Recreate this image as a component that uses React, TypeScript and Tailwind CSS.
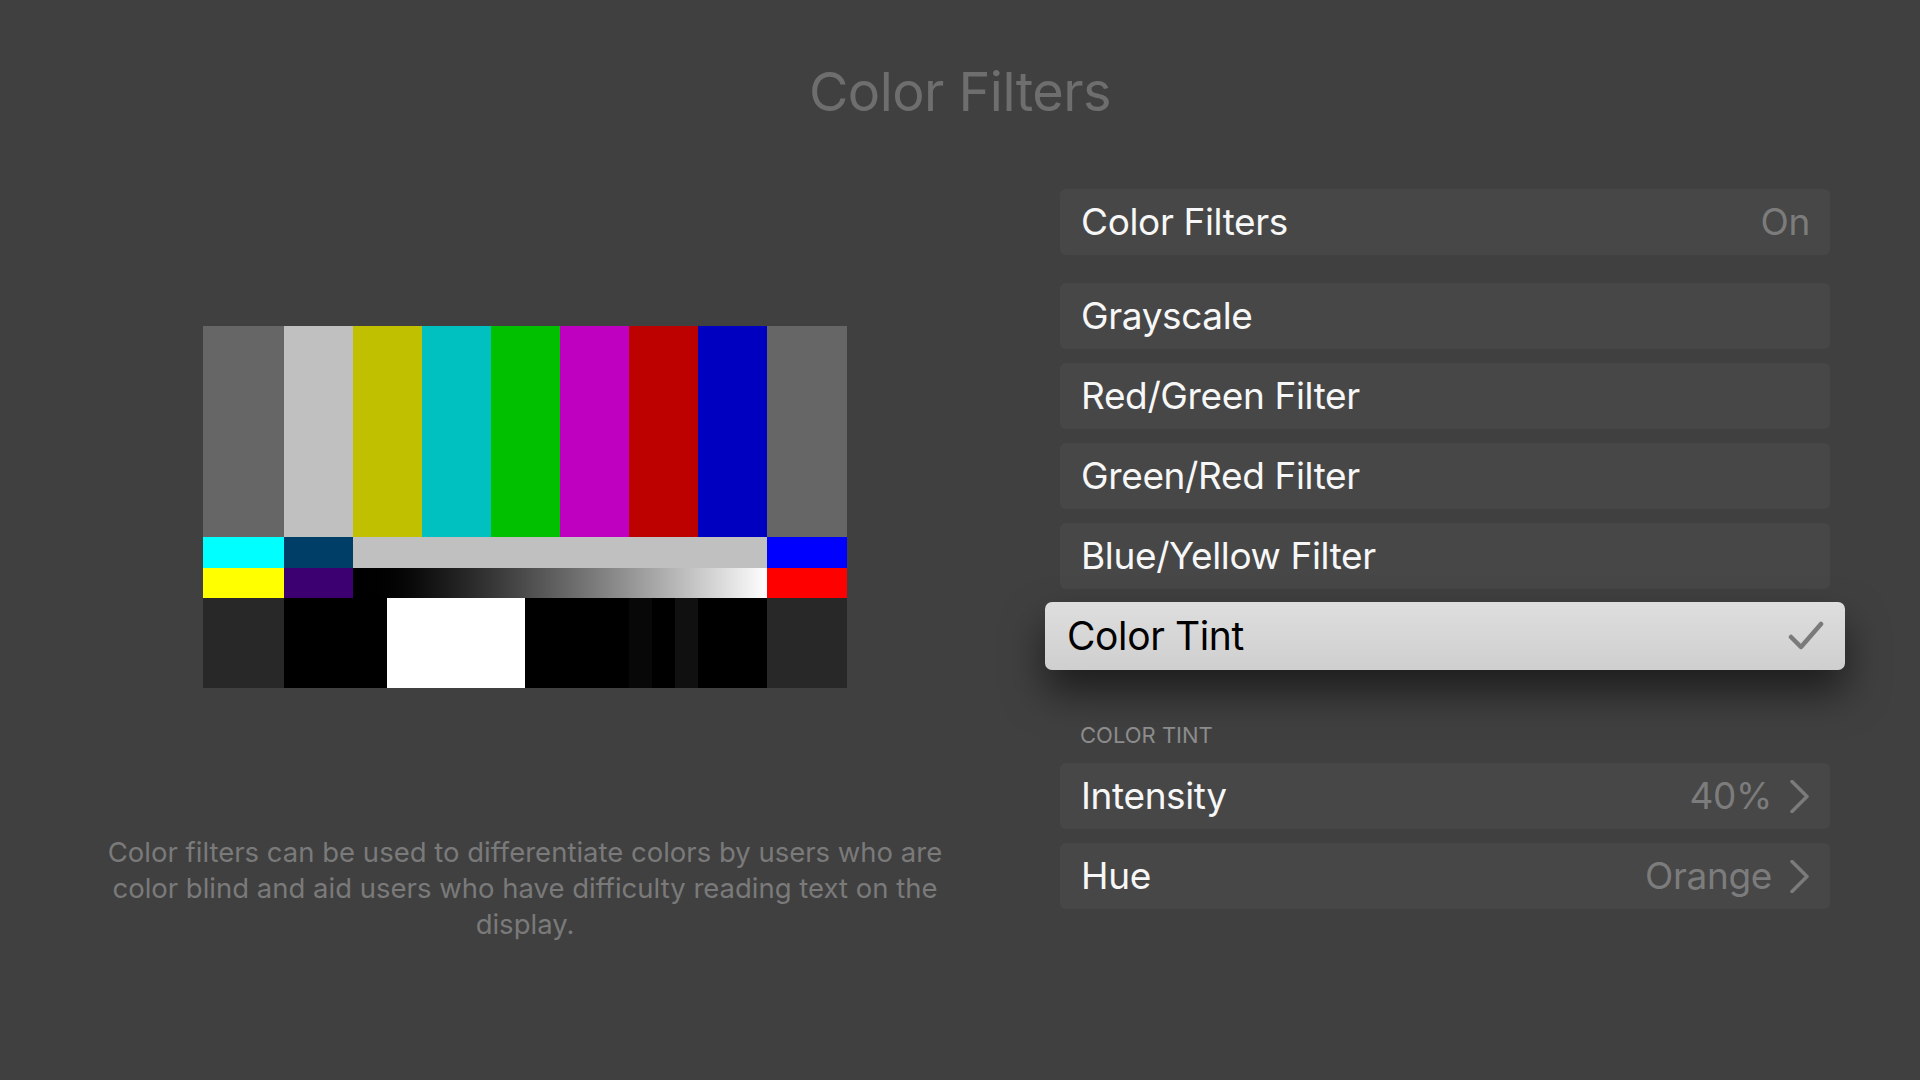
import React from "react"

const topBars = ["#c0c0c0", "#c0c000", "#00c0c0", "#00c000", "#c000c0", "#bd0000", "#0000c0"]

function TestPattern() {
  return (
    <div className="flex flex-col w-[644px] h-[362px]">
      {/* 75% bars */}
      <div className="flex h-[211px]">
        <div className="w-[80.5px] bg-[#666666]" />
        {topBars.map((c) => (
          <div key={c} className="w-[69px]" style={{ backgroundColor: c }} />
        ))}
        <div className="w-[80.5px] bg-[#666666]" />
      </div>
      <div className="flex h-[31px]">
        <div className="w-[80.5px] bg-[#00ffff]" />
        <div className="w-[69px] bg-[#003e68]" />
        <div className="w-[414px] bg-[#c0c0c0]" />
        <div className="w-[80.5px] bg-[#0000ff]" />
      </div>
      <div className="flex h-[30px]">
        <div className="w-[80.5px] bg-[#ffff00]" />
        <div className="w-[69px] bg-[#3c0070]" />
        <div className="w-[414px] bg-gradient-to-r from-black to-white" />
        <div className="w-[80.5px] bg-[#ff0000]" />
      </div>
      {/* pluge row */}
      <div className="flex h-[90px]">
        <div className="w-[80.5px] bg-[#282828]" />
        <div className="w-[103.5px] bg-black" />
        <div className="w-[138px] bg-white" />
        <div className="w-[103.5px] bg-black" />
        <div className="w-[23px] bg-[#080808]" />
        <div className="w-[23px] bg-black" />
        <div className="w-[23px] bg-[#101010]" />
        <div className="w-[69px] bg-black" />
        <div className="w-[80.5px] bg-[#282828]" />
      </div>
    </div>
  )
}

function Chevron() {
  return (
    <svg width="20" height="33" viewBox="0 0 20 33" fill="none" className="ml-[18px]">
      <path d="M2 1.5 L17 16.5 L2 31.5" stroke="#7b7b7b" strokeWidth="3.5" strokeLinecap="round" strokeLinejoin="round" />
    </svg>
  )
}

function Row({ label, value, chevron }: { label: string; value?: string; chevron?: boolean }) {
  return (
    <div className="flex items-center h-[66px] rounded-[6px] bg-[#474747] pl-[21px] pr-[20px]">
      <span className="text-[37px] text-[#f7f7f7] tracking-[-0.01em]">{label}</span>
      <span className="ml-auto text-[37px] text-[#7c7c7c] tracking-[-0.01em]">{value}</span>
      {chevron && <Chevron />}
    </div>
  )
}

export default function App() {
  return (
    <div className="w-[1920px] h-[1080px] bg-[#404040] font-[family-name:Inter,'Noto_Sans',sans-serif] overflow-hidden">
      <h1 className="pt-[62px] text-center text-[54px] leading-[60px] text-[#6e6e6e] tracking-[-0.01em]">Color Filters</h1>

      <div className="flex mt-[67px] pl-[60px]">
        {/* Left: preview + description */}
        <div className="w-[930px] flex flex-col items-center pt-[137px]">
          <TestPattern />
          <p className="mt-[146px] w-[850px] text-center text-[27.5px] leading-[36px] text-[#7a7a7a]">
            Color filters can be used to differentiate colors by users who are color blind and aid users who have
            difficulty reading text on the display.
          </p>
        </div>

        {/* Right: settings list */}
        <div className="ml-[70px] w-[770px] flex flex-col">
          <Row label="Color Filters" value="On" />
          <div className="mt-[28px] flex flex-col gap-[14px]">
            <Row label="Grayscale" />
            <Row label="Red/Green Filter" />
            <Row label="Green/Red Filter" />
            <Row label="Blue/Yellow Filter" />
            <div className="-mx-[15px] -my-[1px] h-[68px] flex items-center rounded-[7px] bg-gradient-to-b from-[#dedede] to-[#cfcfcf] pl-[22px] pr-[21px] shadow-[0_22px_40px_rgba(0,0,0,0.55)]">
              <span className="text-[39px] text-black tracking-[-0.01em]">Color Tint</span>
              <svg width="36" height="30" viewBox="0 0 36 30" fill="none" className="ml-auto">
                <path d="M3 16 L13 26 L33 3" stroke="#7a7a7a" strokeWidth="4.5" strokeLinecap="round" strokeLinejoin="round" />
              </svg>
            </div>
          </div>
          <div className="mt-[53px] pl-[20px] text-[22px] leading-[26px] text-[#8c8c8c] uppercase">Color Tint</div>
          <div className="mt-[15px] flex flex-col gap-[14px]">
            <Row label="Intensity" value="40%" chevron />
            <Row label="Hue" value="Orange" chevron />
          </div>
        </div>
      </div>
    </div>
  )
}
